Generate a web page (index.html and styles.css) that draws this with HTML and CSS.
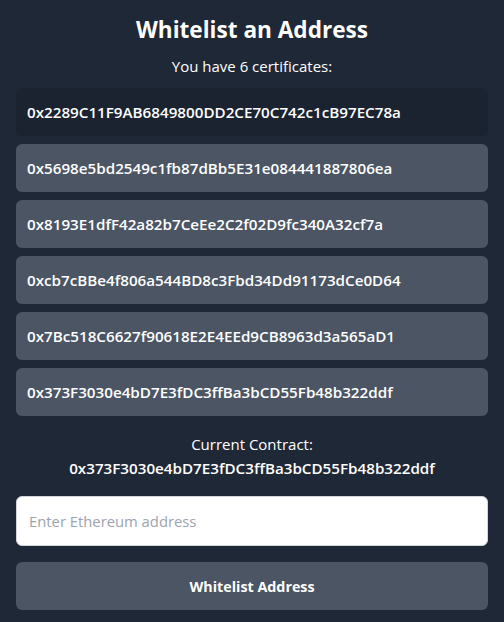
FILE: index.html
```html
<!DOCTYPE html>
<html>
<head>
<meta charset="utf-8">
<link rel="stylesheet" href="styles.css">
</head>
<body>
<div class="panel">
  <h1 class="title">Whitelist an Address</h1>
  <p class="count">You have 6 certificates:</p>
  <ul class="list">
    <li class="item item-active">0x2289C11F9AB6849800DD2CE70C742c1cB97EC78a</li>
    <li class="item">0x5698e5bd2549c1fb87dBb5E31e084441887806ea</li>
    <li class="item">0x8193E1dfF42a82b7CeEe2C2f02D9fc340A32cf7a</li>
    <li class="item">0xcb7cBBe4f806a544BD8c3Fbd34Dd91173dCe0D64</li>
    <li class="item">0x7Bc518C6627f90618E2E4EEd9CB8963d3a565aD1</li>
    <li class="item">0x373F3030e4bD7E3fDC3ffBa3bCD55Fb48b322ddf</li>
  </ul>
  <div class="contract">
    <div class="contract-label">Current Contract:</div>
    <div class="contract-addr">0x373F3030e4bD7E3fDC3ffBa3bCD55Fb48b322ddf</div>
  </div>
  <input class="field" type="text" placeholder="Enter Ethereum address">
  <button class="btn">Whitelist Address</button>
</div>
</body>
</html>
```
FILE: styles.css
```css
html, body {
  margin: 0;
  padding: 0;
  background: #1f2836;
}
body {
  font-family: "Open Sans", "Noto Sans", sans-serif;
  color: #ffffff;
}
.panel {
  padding: 14px 16px 12px;
  display: flex;
  flex-direction: column;
}
.title {
  margin: 0;
  text-align: center;
  font-size: 22.6px;
  font-weight: 700;
  line-height: 32px;
}
.count {
  margin: 8px 0 0;
  text-align: center;
  font-size: 15px;
  line-height: 24px;
}
.list {
  list-style: none;
  margin: 10px 0 0;
  padding: 0;
  display: flex;
  flex-direction: column;
  gap: 8px;
}
.item {
  height: 48px;
  box-sizing: border-box;
  padding: 0 11px;
  display: flex;
  align-items: center;
  background: #4b5563;
  border-radius: 6px;
  font-size: 15.2px;
  font-weight: 600;
}
.item-active {
  background: #1b2230;
}
.contract {
  margin-top: 16px;
  text-align: center;
  font-size: 15px;
  line-height: 24px;
}
.contract-addr {
  font-size: 15.2px;
  font-weight: 600;
}
.field {
  margin-top: 16px;
  height: 50px;
  box-sizing: border-box;
  border: 1px solid #d1d5db;
  border-radius: 6px;
  padding: 0 12px;
  font-family: inherit;
  font-size: 14.8px;
  background: #ffffff;
  color: #111827;
  outline: none;
}
.field::placeholder {
  color: #9ca3af;
}
.btn {
  margin-top: 16px;
  height: 48px;
  border: none;
  border-radius: 6px;
  background: #4b5563;
  color: #ffffff;
  font-family: inherit;
  font-size: 14.3px;
  font-weight: 700;
}
```
